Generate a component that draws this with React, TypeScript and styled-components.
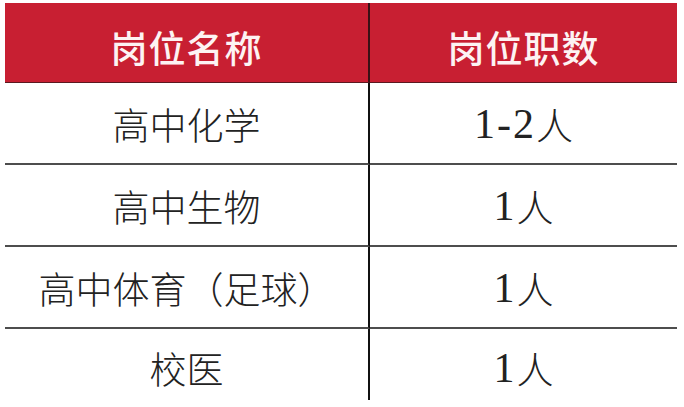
import styled, { createGlobalStyle } from "styled-components";

const GlobalStyle = createGlobalStyle`
  html, body {
    margin: 0;
    padding: 0;
    background: #ffffff;
  }
  body {
    font-family: "Liberation Serif", "Noto Sans CJK SC", serif;
  }
`;

const Page = styled.div`
  padding: 3px 0 0 5px;
  width: 684px;
  height: 407px;
  box-sizing: border-box;
  overflow: hidden;
`;

const Table = styled.div`
  display: grid;
  grid-template-columns: 365px 307px;
  width: 672px;
`;

const HeadCell = styled.div<{ $divider?: boolean }>`
  height: 80px;
  background: #c81f32;
  color: #fdf3f3;
  font-family: "Noto Sans CJK SC", sans-serif;
  font-weight: 500;
  font-size: 37px;
  letter-spacing: 1px;
  display: flex;
  align-items: center;
  justify-content: center;
  padding-top: 8px;
  box-sizing: border-box;
  border-bottom: 1px solid #5a1a20;
  border-right: ${(p) => (p.$divider ? "2px solid #3a1015" : "none")};
`;

const Cell = styled.div<{ $divider?: boolean; $last?: boolean }>`
  height: ${(p) => (p.$last ? "71px" : "82px")};
  color: #222222;
  font-family: "Noto Sans CJK SC", sans-serif;
  font-weight: 300;
  font-size: 37px;
  display: flex;
  align-items: center;
  justify-content: center;
  box-sizing: border-box;
  padding-top: ${(p) => (p.$last ? "6px" : "2px")};
  border-bottom: ${(p) => (p.$last ? "none" : "2px solid #4d4d4d")};
  border-right: ${(p) => (p.$divider ? "2px solid #111111" : "none")};
`;

const Digits = styled.span`
  font-family: "Liberation Serif", serif;
  font-size: 42px;
  letter-spacing: 2px;
  line-height: 1;
`;

const rows: [string, string][] = [
  ["高中化学", "1-2"],
  ["高中生物", "1"],
  ["高中体育（足球）", "1"],
  ["校医", "1"],
];

export default function App() {
  return (
    <>
      <GlobalStyle />
      <Page>
        <Table>
          <HeadCell $divider>岗位名称</HeadCell>
          <HeadCell>岗位职数</HeadCell>
          {rows.map(([name, count], i) => {
            const last = i === rows.length - 1;
            return [
              <Cell key={`n${i}`} $divider $last={last}>
                {name}
              </Cell>,
              <Cell key={`c${i}`} $last={last}>
                <Digits>{count}</Digits>人
              </Cell>,
            ];
          })}
        </Table>
      </Page>
    </>
  );
}
